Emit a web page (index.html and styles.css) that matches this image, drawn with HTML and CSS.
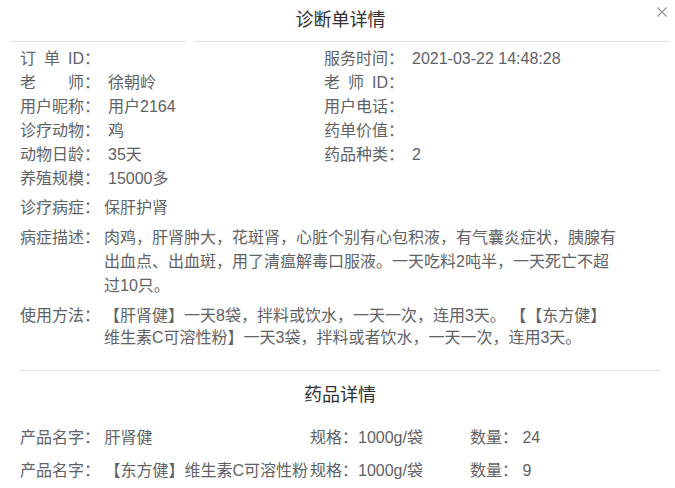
FILE: index.html
```html
<!DOCTYPE html>
<html lang="zh-CN">
<head>
  <meta charset="UTF-8" />
  <meta name="viewport" content="width=device-width, initial-scale=1.0" />
  <title>诊断单详情</title>
  <link rel="stylesheet" href="styles.css">
</head>
<body>
  <div class="dialog">
    <div class="dialog-header">
      <span class="dialog-title">诊断单详情</span>
      <button class="close-btn" aria-label="关闭">
        <svg width="10" height="10" viewBox="0 0 10 10">
          <path d="M0.5 0.5 L9.5 9.5 M9.5 0.5 L0.5 9.5" stroke="#909399" stroke-width="1.1" fill="none" />
        </svg>
      </button>
    </div>
    <div class="header-rule">
      <span class="rule-short"></span>
      <span class="rule-long"></span>
    </div>

    <div class="dialog-body">
      <!-- Basic info -->
      <div class="info-grid">
        <div class="info-item"><span class="info-label">订&ensp;单&ensp;ID：</span><span class="info-value"></span></div>
        <div class="info-item"><span class="info-label">服务时间：</span><span class="info-value">2021-03-22 14:48:28</span></div>
        <div class="info-item"><span class="info-label">老&emsp;&emsp;师：</span><span class="info-value">徐朝岭</span></div>
        <div class="info-item"><span class="info-label">老&ensp;师&ensp;ID：</span><span class="info-value"></span></div>
        <div class="info-item"><span class="info-label">用户昵称：</span><span class="info-value">用户2164</span></div>
        <div class="info-item"><span class="info-label">用户电话：</span><span class="info-value"></span></div>
        <div class="info-item"><span class="info-label">诊疗动物：</span><span class="info-value">鸡</span></div>
        <div class="info-item"><span class="info-label">药单价值：</span><span class="info-value"></span></div>
        <div class="info-item"><span class="info-label">动物日龄：</span><span class="info-value">35天</span></div>
        <div class="info-item"><span class="info-label">药品种类：</span><span class="info-value">2</span></div>
        <div class="info-item"><span class="info-label">养殖规模：</span><span class="info-value">15000多</span></div>
      </div>

      <div class="fields">
        <div class="field">
          <span class="field-label">诊疗病症：</span>
          <span class="field-value">保肝护肾</span>
        </div>
        <div class="field">
          <span class="field-label">病症描述：</span>
          <span class="field-value">肉鸡，肝肾肿大，花斑肾，心脏个别有心包积液，有气囊炎症状，胰腺有出血点、出血斑，用了清瘟解毒口服液。一天吃料2吨半，一天死亡不超过10只。</span>
        </div>
        <div class="field usage">
          <span class="field-label">使用方法：</span>
          <span class="field-value">【肝肾健】一天8袋，拌料或饮水，一天一次，连用3天。 【【东方健】维生素C可溶性粉】一天3袋，拌料或者饮水，一天一次，连用3天。</span>
        </div>
      </div>

      <div class="divider"></div>

      <!-- Medicine details -->
      <h2 class="section-title">药品详情</h2>
      <div class="product-list">
        <div class="product-row">
          <span class="p-name">产品名字： 肝肾健</span>
          <span class="p-spec">规格：1000g/袋</span>
          <span class="p-qty">数量： 24</span>
        </div>
        <div class="product-row">
          <span class="p-name">产品名字： 【东方健】维生素C可溶性粉</span>
          <span class="p-spec">规格：1000g/袋</span>
          <span class="p-qty">数量： 9</span>
        </div>
      </div>
    </div>
  </div>
</body>
</html>
```

FILE: styles.css
```css
html, body {
  margin: 0;
  padding: 0;
  background-color: #fff;
  font-family: 'Liberation Sans', 'Noto Sans CJK SC', sans-serif;
  color: #606266;
  font-size: 16px;
  text-spacing-trim: space-all;
}

.dialog {
  width: 675px;
  position: relative;
}

.dialog-header {
  display: flex;
  justify-content: center;
  padding-top: 8px;
  height: 35px;
  box-sizing: border-box;
}

.dialog-title {
  font-size: 18px;
  line-height: 24px;
  color: #303133;
  margin-left: 6px;
}

.close-btn {
  position: absolute;
  top: 6px;
  right: 7px;
  width: 12px;
  height: 12px;
  padding: 1px;
  border: none;
  background: none;
  cursor: pointer;
  display: flex;
}

.header-rule {
  display: flex;
  gap: 8px;
  margin: 6px 5px 0 10px;
}

.header-rule span {
  border-top: 1px solid #dcdfe6;
}

.rule-short {
  width: 176px;
}

.rule-long {
  flex: 1;
}

.dialog-body {
  padding: 5px 15px 0 20px;
}

.info-grid {
  display: grid;
  grid-template-columns: 304px 1fr;
  line-height: 24px;
}

.info-item {
  display: flex;
}

.info-label {
  width: 80px;
  flex: none;
  white-space: nowrap;
}

.info-value {
  margin-left: 8px;
}

.fields {
  display: flex;
  flex-direction: column;
  gap: 6px;
  margin-top: 5px;
  line-height: 24px;
}

.field {
  display: flex;
}

.field-label {
  width: 84px;
  flex: none;
  white-space: nowrap;
}

.field-value {
  width: 516px;
}

.usage {
  line-height: 22px;
  padding-top: 1px;
}

.divider {
  border-top: 1px solid #dcdfe6;
  margin-top: 21px;
}

.section-title {
  margin: 12px 0 0;
  font-size: 18px;
  line-height: 24px;
  font-weight: normal;
  color: #303133;
  text-align: center;
}

.product-list {
  margin-top: 14px;
}

.product-row {
  display: flex;
  line-height: 33px;
  white-space: nowrap;
}

.p-name {
  width: 290px;
  flex: none;
}

.p-spec {
  width: 160px;
  flex: none;
}
```
